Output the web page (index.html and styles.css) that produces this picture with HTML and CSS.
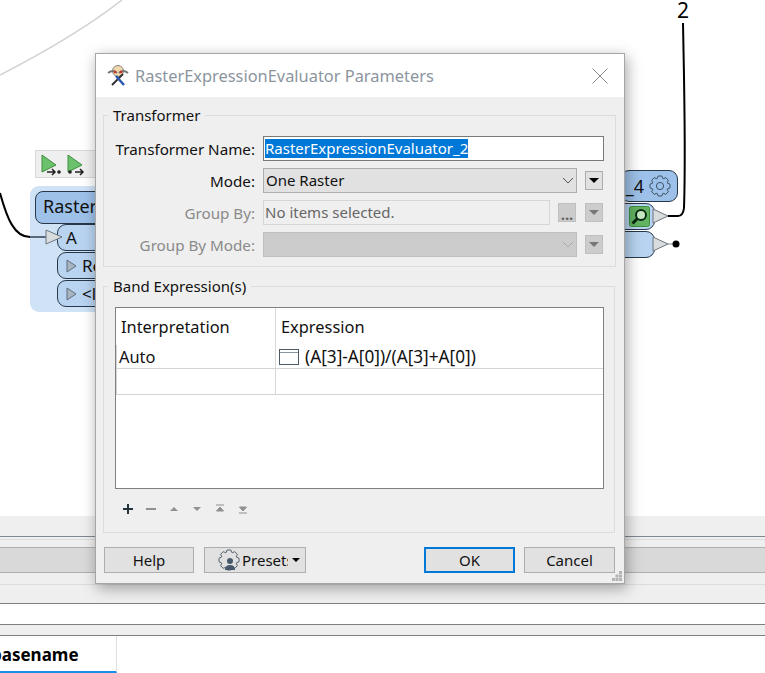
FILE: index.html

```html
<!DOCTYPE html>
<html lang="en">
<head>
    <meta charset="UTF-8" />
    <title>RasterExpressionEvaluator Parameters</title>
    <link rel="stylesheet" href="styles.css">
</head>
<body>

<div class="canvas">
  <svg class="wires" width="765" height="516" viewBox="0 0 765 516">
    <path d="M0 75 C45 52 90 25 122 0" fill="none" stroke="#d0d0d0" stroke-width="1.5"/>
    <path d="M0 193 C7 218 14 237 30 237" fill="none" stroke="#000" stroke-width="2"/>
    <path d="M30 237 H47" fill="none" stroke="#5a6a7a" stroke-width="2"/>
    <path d="M668 216 H678 Q683 216 684 208 C686 150 684 80 683 23" fill="none" stroke="#000" stroke-width="2"/>
    <path d="M668 244 H676" fill="none" stroke="#888" stroke-width="1"/>
    <circle cx="676" cy="244" r="3.5" fill="#000"/>
  </svg>

  <div class="run-bar">
    <svg width="20" height="22" viewBox="0 0 20 22">
      <path d="M1 1 L15 11 L1 18 Z" fill="#6cc26c" stroke="#3f8f3f"/>
      <path d="M6 18 H14 M11 15 L14 18 L11 21" fill="none" stroke="#222" stroke-width="1.5"/>
      <circle cx="18" cy="18" r="1.8" fill="#222"/>
    </svg>
    <svg width="20" height="22" viewBox="0 0 20 22">
      <path d="M1 1 L15 11 L1 18 Z" fill="#6cc26c" stroke="#3f8f3f"/>
      <circle cx="3" cy="18" r="1.8" fill="#222"/>
      <path d="M8 18 H16 M13 15 L16 18 L13 21" fill="none" stroke="#222" stroke-width="1.5"/>
    </svg>
  </div>

  <div class="node-back"></div>
  <div class="node-title">Raster</div>
  <div class="port port-a">A</div>
  <div class="port port-r"><svg width="11" height="14" viewBox="0 0 11 14"><path d="M1 1 L10 7 L1 13 Z" fill="#a8b4c0" stroke="#5f6f7e"/></svg>Re</div>
  <div class="port port-o"><svg width="11" height="14" viewBox="0 0 11 14"><path d="M1 1 L10 7 L1 13 Z" fill="#a8b4c0" stroke="#5f6f7e"/></svg>&lt;l</div>
  <svg class="port-in" width="18" height="16" viewBox="0 0 18 16">
    <path d="M1 1 L17 8 L1 15 Z" fill="#d8dcdc" stroke="#6a7680"/>
  </svg>

  <div class="node-right">
    <span>_4</span>
    <svg width="22" height="22" viewBox="-11 -11 22 22">
      <path class="gear-line" d="M7.4 -2.9 L10 -1.8 L10 1.8 L7.4 2.9 L7.28 3.18 L8.34 5.8 L5.8 8.34 L3.18 7.28 L2.9 7.4 L1.8 10 L-1.8 10 L-2.9 7.4 L-3.18 7.28 L-5.8 8.34 L-8.34 5.8 L-7.28 3.18 L-7.4 2.9 L-10 1.8 L-10 -1.8 L-7.4 -2.9 L-7.28 -3.18 L-8.34 -5.8 L-5.8 -8.34 L-3.18 -7.28 L-2.9 -7.4 L-1.8 -10 L1.8 -10 L2.9 -7.4 L3.18 -7.28 L5.8 -8.34 L8.34 -5.8 L7.28 -3.18 Z"/>
      <circle class="gear-line" r="3.6"/>
    </svg>
  </div>
  <div class="out out-top">
    <svg width="21" height="21" viewBox="0 0 21 21">
      <rect x="0.5" y="0.5" width="20" height="20" rx="2" fill="#62b462" stroke="#3f8f3f"/>
      <circle cx="12" cy="9" r="5" fill="#c5eac0" stroke="#0c2a14" stroke-width="2"/>
      <path d="M8.5 12.5 L3.5 17.5" stroke="#0c2a14" stroke-width="3"/>
    </svg>
  </div>
  <div class="out out-bottom"></div>
  <svg class="port-out port-out-top" width="18" height="16" viewBox="0 0 18 16">
    <path d="M1 1 L16 8 L1 15 Z" fill="#d8dcdc" stroke="#6a7680"/>
  </svg>
  <svg class="port-out port-out-bottom" width="18" height="16" viewBox="0 0 18 16">
    <path d="M1 1 L16 8 L1 15 Z" fill="#d8dcdc" stroke="#6a7680"/>
  </svg>
  <div class="wire-label">2</div>
</div>

<div class="panels">
  <div class="band-top"></div>
  <div class="band-rule"></div>
  <div class="band-mid"></div>
  <div class="band-low"></div>
  <div class="band-white"></div>
  <div class="band-thin"></div>
  <div class="tabs"><div class="tab">basename</div></div>
</div>

<div class="dialog">
  <div class="title-bar">
    <svg class="app-icon" width="24" height="24" viewBox="0 0 24 24">
      <circle cx="12" cy="7" r="5.5" fill="#f0d8a8" stroke="#888"/>
      <path d="M2 9 Q7 5 11 9 M22 9 Q17 5 13 9" fill="none" stroke="#777" stroke-width="2"/>
      <circle cx="9" cy="8" r="1.3" fill="#d03030"/>
      <circle cx="15" cy="8" r="1.3" fill="#d03030"/>
      <path d="M6 21 L17 10" stroke="#333" stroke-width="2"/>
      <path d="M10 12 L18 21" stroke="#2a56b0" stroke-width="2.5"/>
    </svg>
    <span class="title-text">RasterExpressionEvaluator Parameters</span>
    <svg class="close-x" width="16" height="16" viewBox="0 0 16 16">
      <path d="M0.5 0.5 L15.5 15.5 M15.5 0.5 L0.5 15.5" stroke="#888" stroke-width="1"/>
    </svg>
  </div>

  <div class="dialog-body">
    <fieldset class="group">
      <legend>Transformer</legend>
      <div class="form-grid">
        <label>Transformer Name:</label>
        <div class="field field-name"><span class="selected">RasterExpressionEvaluator_2</span></div>

        <label>Mode:</label>
        <div class="combo">One Raster
          <svg class="chev" width="12" height="7" viewBox="0 0 12 7"><path d="M1 1 L6 6 L11 1" fill="none" stroke="#555"/></svg>
        </div>
        <div class="mini"><span class="tri"></span></div>

        <label class="off">Group By:</label>
        <div class="field field-off">No items selected.</div>
        <div class="dots">...</div>
        <div class="mini mini-off"><span class="tri"></span></div>

        <label class="off">Group By Mode:</label>
        <div class="combo combo-off">
          <svg class="chev" width="12" height="7" viewBox="0 0 12 7"><path d="M1 1 L6 6 L11 1" fill="none" stroke="#aaa"/></svg>
        </div>
        <div class="mini mini-off"><span class="tri"></span></div>
      </div>
    </fieldset>

    <fieldset class="group group-band">
      <legend>Band Expression(s)</legend>
      <div class="table">
        <div class="row row-head">
          <div class="cell cell-first">Interpretation</div>
          <div class="cell">Expression</div>
        </div>
        <div class="row row-data">
          <div class="cell cell-auto">Auto</div>
          <div class="cell cell-expr"><span class="expr-box"></span>(A[3]-A[0])/(A[3]+A[0])</div>
        </div>
        <div class="row row-empty">
          <div class="cell"></div>
          <div class="cell"></div>
        </div>
      </div>
      <div class="tools">
        <svg width="12" height="12" viewBox="0 0 12 12"><path d="M6 1 V11 M1 6 H11" stroke="#24323c" stroke-width="2"/></svg>
        <svg width="12" height="12" viewBox="0 0 12 12"><path d="M1 6 H11" stroke="#909090" stroke-width="2"/></svg>
        <svg width="12" height="12" viewBox="0 0 12 12"><path d="M2 8 L6 4 L10 8 Z" fill="#909090"/></svg>
        <svg width="12" height="12" viewBox="0 0 12 12"><path d="M2 4 L6 8 L10 4 Z" fill="#909090"/></svg>
        <svg width="12" height="12" viewBox="0 0 12 12"><path d="M2 2 H10 M2.5 8 L6 4 L9.5 8 Z" fill="#909090" stroke="#909090"/></svg>
        <svg width="12" height="12" viewBox="0 0 12 12"><path d="M2 10 H10 M2.5 4 L6 8 L9.5 4 Z" fill="#909090" stroke="#909090"/></svg>
      </div>
    </fieldset>

    <div class="buttons">
      <div class="btn btn-help">Help</div>
      <div class="btn btn-presets">
        <svg width="22" height="22" viewBox="-11 -11 22 22">
          <path class="gear-small" d="M7.4 -2.9 L10 -1.8 L10 1.8 L7.4 2.9 L7.28 3.18 L8.34 5.8 L5.8 8.34 L3.18 7.28 L2.9 7.4 L1.8 10 L-1.8 10 L-2.9 7.4 L-3.18 7.28 L-5.8 8.34 L-8.34 5.8 L-7.28 3.18 L-7.4 2.9 L-10 1.8 L-10 -1.8 L-7.4 -2.9 L-7.28 -3.18 L-8.34 -5.8 L-5.8 -8.34 L-3.18 -7.28 L-2.9 -7.4 L-1.8 -10 L1.8 -10 L2.9 -7.4 L3.18 -7.28 L5.8 -8.34 L8.34 -5.8 L7.28 -3.18 Z"/>
          <circle cx="1" cy="1" r="3" fill="#46586a"/>
          <path d="M-4 10 Q-4 5 1 5 Q6 5 6 10 Z" fill="#46586a"/>
        </svg>
        <span class="presets-text">Presets</span>
        <span class="tri tri-small"></span>
      </div>
      <div class="btn-space"></div>
      <div class="btn btn-ok">OK</div>
      <div class="btn btn-cancel">Cancel</div>
    </div>
  </div>
  <svg class="grip" width="11" height="11" viewBox="0 0 11 11">
    <path d="M7 0 h3 v3 h-3 Z M3.5 3.5 h3 v3 h-3 Z M7 3.5 h3 v3 h-3 Z M0 7 h3 v3 h-3 Z M3.5 7 h3 v3 h-3 Z M7 7 h3 v3 h-3 Z" fill="#b4b4b4"/>
  </svg>
</div>

</body>
</html>
```

FILE: styles.css

```css
* {
  box-sizing: border-box;
}
html, body {
  margin: 0;
  padding: 0;
}
body {
  position: relative;
  width: 765px;
  height: 673px;
  overflow: hidden;
  background: #ffffff;
  font-family: "Noto Sans", "Open Sans", sans-serif;
  font-size: 15px;
  color: #111;
}

/* workspace behind the dialog */
.canvas {
  position: relative;
  height: 516px;
  overflow: hidden;
}
.wires {
  position: absolute;
  left: 0;
  top: 0;
  z-index: 1;
}
.run-bar {
  position: absolute;
  left: 35px;
  top: 150px;
  width: 70px;
  height: 28px;
  display: flex;
  gap: 6px;
  padding: 3px 5px;
  background: #efefef;
  border: 1px solid #d8d8d8;
}
.node-back {
  position: absolute;
  left: 30px;
  top: 186px;
  width: 100px;
  height: 126px;
  background: #cfe2f6;
  border-radius: 9px;
}
.node-title {
  position: absolute;
  left: 35px;
  top: 191px;
  width: 90px;
  height: 33px;
  padding: 2px 0 0 7px;
  font-size: 18px;
  background: #9dc1e9;
  border: 1px solid #26384a;
  border-radius: 8px;
}
.port {
  position: absolute;
  left: 57px;
  width: 60px;
  height: 27px;
  padding: 0 0 0 8px;
  font-size: 17px;
  background: #b9d4f1;
  border: 1px solid #26384a;
  border-radius: 9px;
  display: flex;
  align-items: center;
  gap: 5px;
}
.port-a { top: 224px; }
.port-r { top: 252px; }
.port-o { top: 280px; }
.port-in {
  position: absolute;
  left: 45px;
  top: 229px;
  z-index: 2;
}
.node-right {
  position: absolute;
  left: 620px;
  top: 170px;
  width: 58px;
  height: 32px;
  display: flex;
  align-items: center;
  justify-content: flex-end;
  gap: 5px;
  padding-right: 6px;
  font-size: 18px;
  background: #9dc1e9;
  border: 1px solid #26384a;
  border-radius: 9px;
}
.gear-line {
  fill: none;
  stroke: #3d5266;
  stroke-width: 1;
}
.out {
  position: absolute;
  left: 615px;
  width: 40px;
  background: #b9d4f1;
  border: 1px solid #26384a;
  border-radius: 0 9px 9px 0;
}
.out-top {
  top: 203px;
  height: 27px;
  padding: 2px 0 0 13px;
}
.out-bottom {
  top: 231px;
  height: 27px;
}
.port-out {
  position: absolute;
  left: 652px;
  z-index: 2;
}
.port-out-top { top: 208px; }
.port-out-bottom { top: 236px; }
.wire-label {
  position: absolute;
  left: 677px;
  top: 0;
  font-size: 21px;
  line-height: 21px;
  color: #000;
}

/* docked panels along the bottom */
.panels {
  height: 157px;
  background: #efefef;
}
.band-top {
  height: 21px;
  border-bottom: 1px solid #808890;
}
.band-rule {
  height: 8px;
  margin-top: 2px;
  border-top: 1px solid #dcdcdc;
}
.band-mid {
  height: 26px;
  background: #d9d9d9;
  border-top: 1px solid #b0b0b0;
  border-bottom: 1px solid #b0b0b0;
}
.band-low {
  margin-top: 11px;
  height: 20px;
  border-top: 1px solid #dcdcdc;
  border-bottom: 1px solid #808080;
}
.band-white {
  height: 20px;
  background: #fff;
}
.band-thin {
  height: 12px;
  border-top: 1px solid #808080;
  border-bottom: 1px solid #808080;
}
.tabs {
  height: 37px;
  background: #fff;
}
.tab {
  width: 117px;
  height: 37px;
  padding: 7px 0 0 0;
  text-indent: -9px;
  overflow: hidden;
  font-weight: 700;
  font-size: 17px;
  color: #000;
  border-right: 1px solid #e0e0e0;
  border-bottom: 2px solid #1a8fe8;
}

/* parameters dialog */
.dialog {
  position: absolute;
  left: 95px;
  top: 53px;
  z-index: 3;
  width: 530px;
  height: 531px;
  background: #efefef;
  border: 1px solid #a6a6a6;
  box-shadow: 2px 4px 14px rgba(0, 0, 0, 0.35);
}
.title-bar {
  height: 43px;
  display: flex;
  align-items: center;
  padding: 0 16px 0 10px;
  background: #fff;
}
.app-icon {
  margin-right: 5px;
}
.title-text {
  flex: 1;
  font-size: 16.4px;
  color: #8c959e;
}
.dialog-body {
  padding: 8px 9px 0 7px;
}
.group {
  margin: 0;
  padding: 11px 11px 9px 0;
  border: 1px solid #dcdcdc;
  height: 162px;
}
.group legend {
  margin-left: 4px;
  padding: 0 5px;
  height: 20px;
  line-height: 20px;
  font-size: 15px;
}
.group-band {
  margin-top: 9px;
  height: 257px;
  padding: 11px 10px 0 11px;
}
.group-band legend {
  margin-left: -7px;
}
.form-grid {
  display: grid;
  grid-template-columns: 151px 287px 18px 20px;
  grid-auto-rows: 25px;
  column-gap: 8px;
  row-gap: 7px;
  align-items: center;
}
.form-grid label {
  text-align: right;
  font-size: 15.2px;
}
.form-grid .off {
  color: #8a8a8a;
}
.field {
  height: 25px;
  line-height: 23px;
  padding-left: 1px;
  background: #fff;
  border: 1px solid #7a7a7a;
  white-space: nowrap;
}
.field-name {
  grid-column: 2 / 5;
}
.selected {
  display: inline-block;
  line-height: 19px;
  background: #0078d7;
  color: #fff;
}
.field-off {
  padding-left: 1px;
  background: #efefef;
  border: 1px solid #d6d6d6;
  color: #666;
}
.combo {
  grid-column: 2 / 4;
  position: relative;
  height: 25px;
  margin-right: -1px;
  line-height: 23px;
  padding-left: 2px;
  background: #e1e1e1;
  border: 1px solid #adadad;
}
.combo-off {
  background: #cccccc;
  border-color: #bfbfbf;
}
.chev {
  position: absolute;
  right: 2px;
  top: 8px;
}
.mini {
  margin-left: 1px;
  width: 18px;
  height: 19px;
  display: flex;
  align-items: center;
  justify-content: center;
  background: #e1e1e1;
  border: 1px solid #adadad;
}
.mini-off {
  background: #cccccc;
  border-color: #bfbfbf;
}
.tri {
  width: 0;
  height: 0;
  border-top: 5px solid #000;
  border-left: 5px solid transparent;
  border-right: 5px solid transparent;
}
.mini-off .tri {
  border-top-color: #777;
}
.dots {
  height: 19px;
  line-height: 21px;
  text-align: center;
  font-weight: 700;
  color: #666;
  background: #cccccc;
  border: 1px solid #bfbfbf;
}

.table {
  height: 182px;
  background: #fff;
  border: 1px solid #808080;
}
.row {
  display: grid;
  grid-template-columns: 160px 1fr;
}
.cell {
  display: flex;
  align-items: center;
  padding-left: 5px;
  font-size: 16.4px;
  white-space: nowrap;
}
.cell-first {
  border-right: 1px solid #d8d8d8;
}
.row-head {
  height: 37px;
}
.row-data {
  height: 24px;
  border-bottom: 1px solid #d4d4d4;
}
.row-data .cell:first-child,
.row-empty .cell:first-child {
  border-right: 1px solid #d8d8d8;
}
.cell-auto {
  padding-left: 2px;
  padding-bottom: 1px;
}
.cell-expr {
  padding-left: 3px;
  padding-bottom: 1px;
  font-size: 17.2px;
}
.row-empty {
  height: 26px;
  border-bottom: 1px solid #d4d4d4;
}
.row-data, .row-empty {
  grid-template-columns: 159px 1fr;
  border-left: 1px solid #d4d4d4;
}
.expr-box {
  width: 20px;
  height: 16px;
  margin-right: 6px;
  background: #fff;
  border: 1px solid #4c5a66;
  box-shadow: inset 0 2px 0 #fff, inset 0 3px 0 #8a949c;
}
.tools {
  display: flex;
  align-items: center;
  gap: 11px;
  height: 40px;
  padding-left: 7px;
}
.buttons {
  display: flex;
  margin-top: 14px;
  padding-left: 1px;
}
.btn {
  height: 26px;
  display: flex;
  align-items: center;
  justify-content: center;
  background: #e1e1e1;
  border: 1px solid #adadad;
}
.btn-help {
  width: 90px;
}
.btn-presets {
  width: 102px;
  margin-left: 10px;
  padding: 0 0 0 13px;
  justify-content: flex-start;
  gap: 2px;
}
.gear-small {
  fill: none;
  stroke: #55636f;
  stroke-width: 1;
}
.presets-text {
  width: 46px;
  overflow: hidden;
}
.tri-small {
  margin-left: 2px;
  border-top-width: 4px;
  border-left-width: 4px;
  border-right-width: 4px;
}
.btn-space {
  flex: 1;
}
.btn-ok {
  width: 91px;
  border: 2px solid #0078d7;
}
.btn-cancel {
  width: 91px;
  margin-left: 9px;
}
.grip {
  position: absolute;
  right: 1px;
  bottom: 1px;
}
.close-x {
  flex: none;
}
```
